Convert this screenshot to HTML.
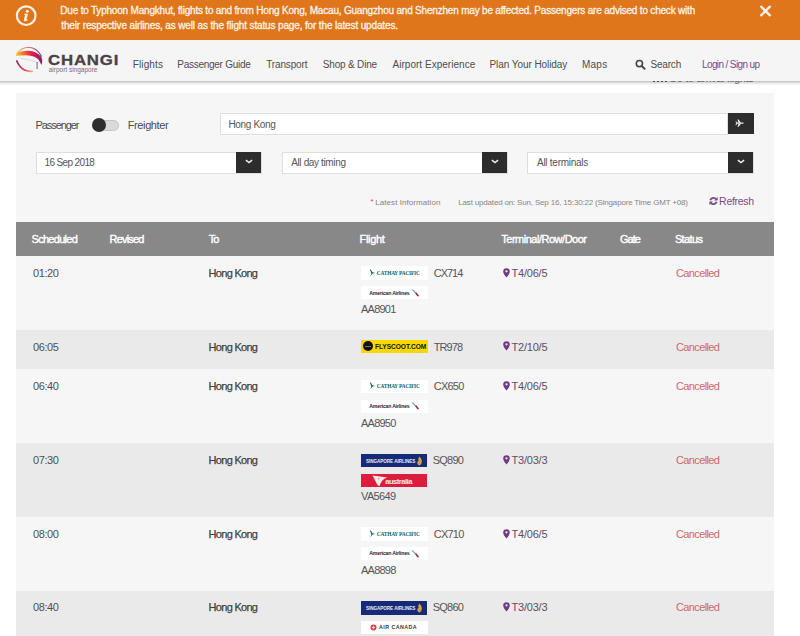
<!DOCTYPE html>
<html><head><meta charset="utf-8">
<style>
html,body{margin:0;padding:0;}
body{width:800px;height:636px;overflow:hidden;position:relative;background:#ffffff;font-family:"Liberation Sans",sans-serif;}
#root{position:relative;width:800px;height:636px;overflow:hidden;background:#ffffff;}
.a{position:absolute;}
.t{position:absolute;z-index:6;white-space:nowrap;font-family:"Liberation Sans",sans-serif;}
#banner{left:0;top:0;width:800px;height:40px;background:#df761c;}
#nav{left:-10px;top:40px;width:820px;height:41px;background:#f5f5f5;box-shadow:0 1.5px 3px rgba(0,0,0,0.3);z-index:5;}
#panel{left:16px;top:93px;width:758px;height:600px;background:#f6f6f6;}
.box{position:absolute;background:#fff;border:1px solid #dedede;box-sizing:border-box;}
.btn{position:absolute;background:#2d2d2d;}
.row{position:absolute;left:16px;width:758px;}
.logo{position:absolute;left:361px;width:67px;height:13px;}
</style></head>
<body>
<div id="root">
<div id="banner" class="a"></div>
<svg class="a" style="left:14px;top:4px;z-index:6" width="26" height="24" viewBox="0 0 26 24">
  <circle cx="12.2" cy="11.7" r="9.3" fill="none" stroke="#fdf1e4" stroke-width="2.2"/>
  <circle cx="13.3" cy="7.3" r="1.5" fill="#fdf1e4"/>
  <path d="M10.4 9.8 L14 9.8 L12.6 15 Q12.4 15.8 13.4 15.2 L13.7 16 Q12 17.6 10.6 17.2 Q9.6 16.8 10 15.3 L11 11 L10.2 10.8 Z" fill="#fdf1e4"/>
</svg>
<svg class="a" style="left:758px;top:4px;z-index:6" width="15" height="15" viewBox="0 0 15 15">
  <path d="M2.5 2 L12.5 12 M12.5 2 L2.5 12" stroke="#fdf3e8" stroke-width="2.4"/>
</svg>

<!-- hidden go-to-arrival text behind nav -->
<div class="a" style="left:652px;top:80px;width:16px;height:3px;z-index:1">
  <div class="a" style="left:1px;top:0;width:2px;height:2.4px;background:#666"></div>
  <div class="a" style="left:5px;top:0;width:2px;height:2.4px;background:#666"></div>
  <div class="a" style="left:9px;top:0;width:2px;height:2.4px;background:#666"></div>
  <div class="a" style="left:13px;top:0;width:2px;height:2.4px;background:#666"></div>
</div>
<div id="nav" class="a">
  <svg class="a" style="left:24px;top:5px" width="32" height="30" viewBox="14 45 32 30">
    <defs>
      <linearGradient id="g1" x1="16" y1="0" x2="42" y2="0" gradientUnits="userSpaceOnUse">
        <stop offset="0" stop-color="#f9d030"/><stop offset="0.3" stop-color="#f46a22"/><stop offset="0.6" stop-color="#e81c48"/><stop offset="0.85" stop-color="#b01a64"/><stop offset="1" stop-color="#7a2a6a"/>
      </linearGradient>
      <linearGradient id="g2" x1="16" y1="0" x2="42" y2="0" gradientUnits="userSpaceOnUse">
        <stop offset="0" stop-color="#f5b030"/><stop offset="0.4" stop-color="#e88a8a"/><stop offset="0.75" stop-color="#9a4a7a"/><stop offset="1" stop-color="#5a3a5a"/>
      </linearGradient>
      <linearGradient id="g3" x1="16" y1="60" x2="33" y2="72" gradientUnits="userSpaceOnUse">
        <stop offset="0" stop-color="#8a2060"/><stop offset="0.55" stop-color="#e02848"/><stop offset="1" stop-color="#f8c070"/>
      </linearGradient>
    </defs>
    <path d="M17 53.8 Q21 47.3 28.6 47.2 Q37 47.5 41.6 56.5" fill="none" stroke="url(#g2)" stroke-width="1.1"/>
    <path d="M15.6 56 Q16 53.4 17.6 52.6 Q22 50.4 28.6 50.7 Q36.8 51.2 41 56.6 Q43.2 60.4 41.4 65 Q40 61.8 38.4 59.4 Q35.2 55.8 28.6 55.4 Q21.5 55.2 15.6 56 Z" fill="url(#g1)"/>
    <path d="M20 58.4 Q28 59.2 34 61.4 Q36.5 62.3 38.3 63" fill="none" stroke="#cdd0d8" stroke-width="0.8"/>
    <path d="M37.1 62 L37.1 69" fill="none" stroke="#5a5060" stroke-width="0.9"/>
    <path d="M16.8 61 Q19.5 67.5 24.5 70 Q28.5 71.8 32.5 71.3" fill="none" stroke="url(#g3)" stroke-width="1.7" stroke-linecap="round"/>
  </svg>
  <svg class="a" style="left:644px;top:19px" width="14" height="12" viewBox="634 59 14 12">
    <circle cx="639.4" cy="63.6" r="3.1" fill="none" stroke="#444" stroke-width="1.6"/>
    <path d="M641.6 65.9 L644.6 68.8" stroke="#444" stroke-width="1.9" stroke-linecap="round"/>
  </svg>
</div>

<div id="panel" class="a"></div>

<!-- toggle -->
<div class="a" style="left:99px;top:120px;width:20px;height:11px;border-radius:6px;background:#dadada;border:1px solid #c4c4c4;box-sizing:border-box"></div>
<div class="a" style="left:92px;top:118.3px;width:14px;height:14px;border-radius:50%;background:#2e2e2e"></div>

<!-- search input -->
<div class="box" style="left:220px;top:113px;width:508px;height:22px"></div>
<div class="btn" style="left:727.5px;top:113px;width:26px;height:21px"></div>
<svg class="a" style="left:735.4px;top:118.6px" width="9.2" height="8.4" viewBox="0 0 11 10">
  <path d="M1.2 4.3 L9.2 4.3 Q10.6 4.5 10.6 5 Q10.6 5.5 9.2 5.7 L1.2 5.7 Z" fill="#f0f0f0"/>
  <path d="M4.2 4.4 L3 0.6 L4.3 0.6 L7.2 4.4 Z M4.2 5.6 L3 9.4 L4.3 9.4 L7.2 5.6 Z" fill="#f0f0f0"/>
  <path d="M1.2 4.5 L0.6 2.6 L1.5 2.6 L2.6 4.5 Z M1.2 5.5 L0.6 7.4 L1.5 7.4 L2.6 5.5 Z" fill="#f0f0f0"/>
</svg>

<!-- selects -->
<div class="box" style="left:36px;top:151.5px;width:226px;height:22px"></div>
<div class="btn" style="left:236px;top:151.5px;width:25px;height:21.5px"></div>
<div class="box" style="left:281.5px;top:151.5px;width:226px;height:22px"></div>
<div class="btn" style="left:481.5px;top:151.5px;width:25.5px;height:21.5px"></div>
<div class="box" style="left:527px;top:151.5px;width:227px;height:22px"></div>
<div class="btn" style="left:727.5px;top:152px;width:25.5px;height:21px"></div>
<svg class="a" style="left:244px;top:158px" width="10" height="8" viewBox="0 0 10 8"><path d="M1.9 2.1 L5 4.6 L8.1 2.1" fill="none" stroke="#eee" stroke-width="1.5"/></svg>
<svg class="a" style="left:489.5px;top:158px" width="10" height="8" viewBox="0 0 10 8"><path d="M1.9 2.1 L5 4.6 L8.1 2.1" fill="none" stroke="#eee" stroke-width="1.5"/></svg>
<svg class="a" style="left:735.5px;top:158px" width="10" height="8" viewBox="0 0 10 8"><path d="M1.9 2.1 L5 4.6 L8.1 2.1" fill="none" stroke="#eee" stroke-width="1.5"/></svg>

<!-- refresh icon -->
<svg class="a" style="left:708px;top:196px" width="11" height="10" viewBox="0 0 11 10">
  <path d="M2.3 4.2 A3.4 3.4 0 0 1 8.2 3.2" fill="none" stroke="#7d4b8a" stroke-width="1.9"/>
  <path d="M9.6 1 L9.6 4.6 L6 4.6 Z" fill="#7d4b8a"/>
  <path d="M8.7 5.8 A3.4 3.4 0 0 1 2.8 6.8" fill="none" stroke="#7d4b8a" stroke-width="1.9"/>
  <path d="M1.4 9 L1.4 5.4 L5 5.4 Z" fill="#7d4b8a"/>
</svg>

<!-- table -->
<div class="row" style="top:222.3px;height:33.7px;background:#888888"></div>
<div class="row" style="top:256px;height:73.8px;background:#f6f6f6"></div>
<div class="row" style="top:329.8px;height:39.6px;background:#eaeaea"></div>
<div class="row" style="top:369.6px;height:73.5px;background:#f6f6f6"></div>
<div class="row" style="top:443.1px;height:73.8px;background:#eaeaea"></div>
<div class="row" style="top:516.9px;height:73.7px;background:#f6f6f6"></div>
<div class="row" style="top:590.6px;height:50px;background:#eaeaea"></div>

<div class="logo" style="top:266.2px;height:13.5px;background:#fff"></div>
<svg class="a" style="left:368.5px;top:269.0px" width="7" height="8" viewBox="0 0 7 8"><path d="M0.8 0.6 L1.8 0.5 L3.4 3.3 L6.4 3.9 L3.6 4.4 L1.2 7.3 L2.4 4.2 Z" fill="#0b5e58"/></svg>
<div class="t" style="left:376.8px;top:270.8px;font:bold 5.4px/5px 'Liberation Serif';letter-spacing:-0.2px;color:#175f5a">CATHAY PACIFIC</div>
<div class="logo" style="top:286.2px;height:13.2px;background:#fff"></div>
<div class="t" style="left:369.3px;top:290.5px;font:bold 5.2px/5px 'Liberation Sans';letter-spacing:-0.22px;color:#222830">American Airlines</div>
<svg class="a" style="left:410.5px;top:288.8px" width="9" height="8" viewBox="0 0 9 8"><path d="M0.4 0.4 L2.2 0.6 L5.2 3.6 L3.8 3.8 Z" fill="#7a9ab8"/><path d="M3.6 3.4 L5.6 3.4 L8.4 7.2 L6.4 7.2 Z" fill="#8a3050"/></svg>
<svg class="a" style="left:502.5px;top:267.6px" width="7" height="10" viewBox="0 0 7 10"><path d="M3.5 0.3 Q6.8 0.3 6.8 3.4 Q6.8 5.6 3.5 9.6 Q0.2 5.6 0.2 3.4 Q0.2 0.3 3.5 0.3 Z M3.5 2.2 A1.15 1.15 0 1 0 3.5 4.5 A1.15 1.15 0 1 0 3.5 2.2 Z" fill="#6f3b82" fill-rule="evenodd"/></svg>
<div class="logo" style="top:340.0px;height:12.5px;background:#fcd800"></div>
<div class="a" style="left:362.8px;top:341.2px;width:10.3px;height:10.3px;border-radius:50%;background:#111"></div>
<div class="a" style="left:365px;top:345.6px;width:6px;height:1.4px;background:#777"></div>
<div class="t" style="left:375px;top:343.1px;font:bold 6.6px/7px 'Liberation Sans';letter-spacing:-0.05px;color:#111">FLYSCOOT.COM</div>
<svg class="a" style="left:502.5px;top:341.4px" width="7" height="10" viewBox="0 0 7 10"><path d="M3.5 0.3 Q6.8 0.3 6.8 3.4 Q6.8 5.6 3.5 9.6 Q0.2 5.6 0.2 3.4 Q0.2 0.3 3.5 0.3 Z M3.5 2.2 A1.15 1.15 0 1 0 3.5 4.5 A1.15 1.15 0 1 0 3.5 2.2 Z" fill="#6f3b82" fill-rule="evenodd"/></svg>
<div class="logo" style="top:379.6px;height:13.5px;background:#fff"></div>
<svg class="a" style="left:368.5px;top:382.40000000000003px" width="7" height="8" viewBox="0 0 7 8"><path d="M0.8 0.6 L1.8 0.5 L3.4 3.3 L6.4 3.9 L3.6 4.4 L1.2 7.3 L2.4 4.2 Z" fill="#0b5e58"/></svg>
<div class="t" style="left:376.8px;top:384.20000000000005px;font:bold 5.4px/5px 'Liberation Serif';letter-spacing:-0.2px;color:#175f5a">CATHAY PACIFIC</div>
<div class="logo" style="top:399.6px;height:13.2px;background:#fff"></div>
<div class="t" style="left:369.3px;top:403.90000000000003px;font:bold 5.2px/5px 'Liberation Sans';letter-spacing:-0.22px;color:#222830">American Airlines</div>
<svg class="a" style="left:410.5px;top:402.20000000000005px" width="9" height="8" viewBox="0 0 9 8"><path d="M0.4 0.4 L2.2 0.6 L5.2 3.6 L3.8 3.8 Z" fill="#7a9ab8"/><path d="M3.6 3.4 L5.6 3.4 L8.4 7.2 L6.4 7.2 Z" fill="#8a3050"/></svg>
<svg class="a" style="left:502.5px;top:381.0px" width="7" height="10" viewBox="0 0 7 10"><path d="M3.5 0.3 Q6.8 0.3 6.8 3.4 Q6.8 5.6 3.5 9.6 Q0.2 5.6 0.2 3.4 Q0.2 0.3 3.5 0.3 Z M3.5 2.2 A1.15 1.15 0 1 0 3.5 4.5 A1.15 1.15 0 1 0 3.5 2.2 Z" fill="#6f3b82" fill-rule="evenodd"/></svg>
<div class="logo" style="top:453.6px;height:13.5px;width:66.3px;background:#172a78"></div>
<div class="t" style="left:366px;top:458.6px;font:bold 4.6px/5px 'Liberation Sans';letter-spacing:-0.05px;color:#e8ecf6">SINGAPORE AIRLINES</div>
<svg class="a" style="left:415.8px;top:455.8px" width="7" height="10" viewBox="0 0 7 10"><path d="M3.2 0.5 Q5.6 2 5.9 5 Q6 8.2 3.6 9.4 Q1.6 9.2 1.2 7 Q1 5.4 2.6 5 Q1.6 3.2 3.2 0.5 Z" fill="#d8a440"/><path d="M3 6 Q4 6.6 3.6 8.2" stroke="#b07a20" stroke-width="0.5" fill="none"/></svg>
<div class="logo" style="top:473.6px;height:13px;width:66px;background:#dc1e3e"></div>
<svg class="a" style="left:372px;top:474.6px" width="16" height="12" viewBox="0 0 16 12"><path d="M0.6 0.4 Q8 1.2 15.2 2.6 Q12 4 10.6 5.2 Q9 6.8 7.4 11.2 Q5.8 10.6 4.6 8.4 Q3 5.2 0.6 0.4 Z" fill="#fbe6ea"/><path d="M5.6 3.2 L7.4 3.4 L7 4.4 Z" fill="#dc1e3e"/></svg>
<div class="t" style="left:385.2px;top:477.5px;font:bold 7.6px/8px 'Liberation Sans';letter-spacing:-0.5px;color:#fbe6ea">australia</div>
<svg class="a" style="left:502.5px;top:454.7px" width="7" height="10" viewBox="0 0 7 10"><path d="M3.5 0.3 Q6.8 0.3 6.8 3.4 Q6.8 5.6 3.5 9.6 Q0.2 5.6 0.2 3.4 Q0.2 0.3 3.5 0.3 Z M3.5 2.2 A1.15 1.15 0 1 0 3.5 4.5 A1.15 1.15 0 1 0 3.5 2.2 Z" fill="#6f3b82" fill-rule="evenodd"/></svg>
<div class="logo" style="top:527.1px;height:13.5px;background:#fff"></div>
<svg class="a" style="left:368.5px;top:529.9px" width="7" height="8" viewBox="0 0 7 8"><path d="M0.8 0.6 L1.8 0.5 L3.4 3.3 L6.4 3.9 L3.6 4.4 L1.2 7.3 L2.4 4.2 Z" fill="#0b5e58"/></svg>
<div class="t" style="left:376.8px;top:531.7px;font:bold 5.4px/5px 'Liberation Serif';letter-spacing:-0.2px;color:#175f5a">CATHAY PACIFIC</div>
<div class="logo" style="top:547.1px;height:13.2px;background:#fff"></div>
<div class="t" style="left:369.3px;top:551.4px;font:bold 5.2px/5px 'Liberation Sans';letter-spacing:-0.22px;color:#222830">American Airlines</div>
<svg class="a" style="left:410.5px;top:549.7px" width="9" height="8" viewBox="0 0 9 8"><path d="M0.4 0.4 L2.2 0.6 L5.2 3.6 L3.8 3.8 Z" fill="#7a9ab8"/><path d="M3.6 3.4 L5.6 3.4 L8.4 7.2 L6.4 7.2 Z" fill="#8a3050"/></svg>
<svg class="a" style="left:502.5px;top:528.5px" width="7" height="10" viewBox="0 0 7 10"><path d="M3.5 0.3 Q6.8 0.3 6.8 3.4 Q6.8 5.6 3.5 9.6 Q0.2 5.6 0.2 3.4 Q0.2 0.3 3.5 0.3 Z M3.5 2.2 A1.15 1.15 0 1 0 3.5 4.5 A1.15 1.15 0 1 0 3.5 2.2 Z" fill="#6f3b82" fill-rule="evenodd"/></svg>
<div class="logo" style="top:601.0px;height:13.5px;width:66.3px;background:#172a78"></div>
<div class="t" style="left:366px;top:606.0px;font:bold 4.6px/5px 'Liberation Sans';letter-spacing:-0.05px;color:#e8ecf6">SINGAPORE AIRLINES</div>
<svg class="a" style="left:415.8px;top:603.2px" width="7" height="10" viewBox="0 0 7 10"><path d="M3.2 0.5 Q5.6 2 5.9 5 Q6 8.2 3.6 9.4 Q1.6 9.2 1.2 7 Q1 5.4 2.6 5 Q1.6 3.2 3.2 0.5 Z" fill="#d8a440"/><path d="M3 6 Q4 6.6 3.6 8.2" stroke="#b07a20" stroke-width="0.5" fill="none"/></svg>
<div class="logo" style="top:621.1px;height:13px;background:#fff"></div>
<svg class="a" style="left:369.5px;top:624.1px" width="7" height="7" viewBox="0 0 7 7"><circle cx="3.5" cy="3.5" r="3" fill="#de3a46"/><path d="M3.5 1.6 L4.3 3 L5.2 2.8 L4.6 4.2 L3.7 4.4 L3.7 5.4 L3.3 5.4 L3.3 4.4 L2.4 4.2 L1.8 2.8 L2.7 3 Z" fill="#f6d4d8"/></svg>
<div class="t" style="left:379px;top:625.3000000000001px;font:bold 5.3px/5px 'Liberation Sans';letter-spacing:0.45px;color:#3a3a3a">AIR CANADA</div>
<svg class="a" style="left:502.5px;top:602.2px" width="7" height="10" viewBox="0 0 7 10"><path d="M3.5 0.3 Q6.8 0.3 6.8 3.4 Q6.8 5.6 3.5 9.6 Q0.2 5.6 0.2 3.4 Q0.2 0.3 3.5 0.3 Z M3.5 2.2 A1.15 1.15 0 1 0 3.5 4.5 A1.15 1.15 0 1 0 3.5 2.2 Z" fill="#6f3b82" fill-rule="evenodd"/></svg>
<div class="t" style="left:60.30px;top:6.30px;font-size:10px;line-height:10px;font-weight:400;letter-spacing:-0.198px;color:#fdf3e8;-webkit-text-stroke:0.3px #fdf3e8">Due to Typhoon Mangkhut, flights to and from Hong Kong, Macau, Guangzhou and Shenzhen may be affected. Passengers are advised to check with</div>
<div class="t" style="left:61.30px;top:20.70px;font-size:10px;line-height:10px;font-weight:400;letter-spacing:-0.140px;color:#fdf3e8;-webkit-text-stroke:0.3px #fdf3e8">their respective airlines, as well as the flight status page, for the latest updates.</div>
<div class="t" style="left:48.20px;top:52.20px;font-size:15px;line-height:15px;font-weight:700;letter-spacing:0.721px;color:#4a4045;-webkit-text-stroke:0.3px #4a4045;transform:scaleX(1.12);transform-origin:0 0">CHANGI</div>
<div class="t" style="left:48.70px;top:67.00px;font-size:6.5px;line-height:6.5px;font-weight:400;letter-spacing:0.000px;color:#7a6a7a;">airport singapore</div>
<div class="t" style="left:132.75px;top:59.50px;font-size:10px;line-height:10px;font-weight:400;letter-spacing:0.125px;color:#4d4d4d;">Flights</div>
<div class="t" style="left:177.25px;top:59.50px;font-size:10px;line-height:10px;font-weight:400;letter-spacing:-0.268px;color:#4d4d4d;">Passenger Guide</div>
<div class="t" style="left:266.25px;top:59.50px;font-size:10px;line-height:10px;font-weight:400;letter-spacing:-0.156px;color:#4d4d4d;">Transport</div>
<div class="t" style="left:322.75px;top:59.50px;font-size:10px;line-height:10px;font-weight:400;letter-spacing:-0.175px;color:#4d4d4d;">Shop &amp; Dine</div>
<div class="t" style="left:392.50px;top:59.50px;font-size:10px;line-height:10px;font-weight:400;letter-spacing:0.029px;color:#4d4d4d;">Airport Experience</div>
<div class="t" style="left:489.50px;top:59.50px;font-size:10px;line-height:10px;font-weight:400;letter-spacing:-0.069px;color:#4d4d4d;">Plan Your Holiday</div>
<div class="t" style="left:582.00px;top:59.50px;font-size:10px;line-height:10px;font-weight:400;letter-spacing:0.233px;color:#4d4d4d;">Maps</div>
<div class="t" style="left:650.40px;top:59.50px;font-size:10px;line-height:10px;font-weight:400;letter-spacing:-0.160px;color:#4d4d4d;">Search</div>
<div class="t" style="left:668.50px;top:73.00px;font-size:11px;line-height:11px;font-weight:400;letter-spacing:-0.325px;color:#777777;z-index:1">Go to arrival flights</div>
<div class="t" style="left:702.00px;top:60.00px;font-size:10px;line-height:10px;font-weight:400;letter-spacing:-0.621px;color:#7b4a87;">Login / Sign up</div>
<div class="t" style="left:35.50px;top:120.40px;font-size:11px;line-height:11px;font-weight:400;letter-spacing:-1.075px;color:#4a4a4a;">Passenger</div>
<div class="t" style="left:127.70px;top:120.40px;font-size:11px;line-height:11px;font-weight:400;letter-spacing:-0.375px;color:#4a4a4a;">Freighter</div>
<div class="t" style="left:228.50px;top:120.00px;font-size:10px;line-height:10px;font-weight:400;letter-spacing:-0.350px;color:#555555;">Hong Kong</div>
<div class="t" style="left:44.50px;top:158.00px;font-size:10px;line-height:10px;font-weight:400;letter-spacing:-0.630px;color:#555555;">16 Sep 2018</div>
<div class="t" style="left:291.20px;top:158.00px;font-size:10px;line-height:10px;font-weight:400;letter-spacing:-0.362px;color:#555555;">All day timing</div>
<div class="t" style="left:537.00px;top:158.00px;font-size:10px;line-height:10px;font-weight:400;letter-spacing:-0.267px;color:#555555;">All terminals</div>
<div class="t" style="left:370.50px;top:197.50px;font-size:8px;line-height:8px;font-weight:400;letter-spacing:0.000px;color:#e04848;">*</div>
<div class="t" style="left:375.30px;top:199.00px;font-size:8px;line-height:8px;font-weight:400;letter-spacing:0.059px;color:#858585;">Latest Information</div>
<div class="t" style="left:458.30px;top:199.00px;font-size:8px;line-height:8px;font-weight:400;letter-spacing:-0.177px;color:#858585;">Last updated on: Sun, Sep 16, 15:30:22 (Singapore Time GMT +08)</div>
<div class="t" style="left:719.10px;top:195.80px;font-size:10.5px;line-height:10.5px;font-weight:400;letter-spacing:-0.300px;color:#7b4a87;">Refresh</div>
<div class="t" style="left:31.50px;top:233.50px;font-size:11px;line-height:11px;font-weight:400;letter-spacing:-0.700px;color:#ffffff;-webkit-text-stroke:0.4px #fff">Scheduled</div>
<div class="t" style="left:109.60px;top:233.50px;font-size:11px;line-height:11px;font-weight:400;letter-spacing:-0.808px;color:#ffffff;-webkit-text-stroke:0.4px #fff">Revised</div>
<div class="t" style="left:208.75px;top:233.50px;font-size:11px;line-height:11px;font-weight:400;letter-spacing:-1.000px;color:#ffffff;-webkit-text-stroke:0.4px #fff">To</div>
<div class="t" style="left:359.50px;top:233.50px;font-size:11px;line-height:11px;font-weight:400;letter-spacing:-0.300px;color:#ffffff;-webkit-text-stroke:0.4px #fff">Flight</div>
<div class="t" style="left:501.30px;top:233.50px;font-size:11px;line-height:11px;font-weight:400;letter-spacing:-0.488px;color:#ffffff;-webkit-text-stroke:0.4px #fff">Terminal/Row/Door</div>
<div class="t" style="left:620.00px;top:233.50px;font-size:11px;line-height:11px;font-weight:400;letter-spacing:-1.000px;color:#ffffff;-webkit-text-stroke:0.4px #fff">Gate</div>
<div class="t" style="left:674.90px;top:233.50px;font-size:11px;line-height:11px;font-weight:400;letter-spacing:-0.620px;color:#ffffff;-webkit-text-stroke:0.4px #fff">Status</div>
<div class="t" style="left:32.90px;top:267.80px;font-size:11px;line-height:11px;font-weight:400;letter-spacing:-0.375px;color:#505050;">01:20</div>
<div class="t" style="left:208.60px;top:267.80px;font-size:11px;line-height:11px;font-weight:400;letter-spacing:-0.713px;color:#3f3f3f;-webkit-text-stroke:0.25px #3f3f3f">Hong Kong</div>
<div class="t" style="left:433.70px;top:267.80px;font-size:11px;line-height:11px;font-weight:400;letter-spacing:-1.000px;color:#555555;">CX714</div>
<div class="t" style="left:361.00px;top:304.30px;font-size:11px;line-height:11px;font-weight:400;letter-spacing:-0.760px;color:#555555;">AA8901</div>
<div class="t" style="left:511.50px;top:267.80px;font-size:11px;line-height:11px;font-weight:400;letter-spacing:-0.217px;color:#5e4e6a;">T4/06/5</div>
<div class="t" style="left:676.00px;top:267.80px;font-size:11px;line-height:11px;font-weight:400;letter-spacing:-0.625px;color:#d2666b;">Cancelled</div>
<div class="t" style="left:32.90px;top:341.60px;font-size:11px;line-height:11px;font-weight:400;letter-spacing:-0.375px;color:#505050;">06:05</div>
<div class="t" style="left:208.60px;top:341.60px;font-size:11px;line-height:11px;font-weight:400;letter-spacing:-0.713px;color:#3f3f3f;-webkit-text-stroke:0.25px #3f3f3f">Hong Kong</div>
<div class="t" style="left:433.70px;top:341.60px;font-size:11px;line-height:11px;font-weight:400;letter-spacing:-0.925px;color:#555555;">TR978</div>
<div class="t" style="left:511.50px;top:341.60px;font-size:11px;line-height:11px;font-weight:400;letter-spacing:-0.217px;color:#5e4e6a;">T2/10/5</div>
<div class="t" style="left:676.00px;top:341.60px;font-size:11px;line-height:11px;font-weight:400;letter-spacing:-0.625px;color:#d2666b;">Cancelled</div>
<div class="t" style="left:32.90px;top:381.20px;font-size:11px;line-height:11px;font-weight:400;letter-spacing:-0.375px;color:#505050;">06:40</div>
<div class="t" style="left:208.60px;top:381.20px;font-size:11px;line-height:11px;font-weight:400;letter-spacing:-0.713px;color:#3f3f3f;-webkit-text-stroke:0.25px #3f3f3f">Hong Kong</div>
<div class="t" style="left:433.70px;top:381.20px;font-size:11px;line-height:11px;font-weight:400;letter-spacing:-0.750px;color:#555555;">CX650</div>
<div class="t" style="left:361.00px;top:417.70px;font-size:11px;line-height:11px;font-weight:400;letter-spacing:-0.760px;color:#555555;">AA8950</div>
<div class="t" style="left:511.50px;top:381.20px;font-size:11px;line-height:11px;font-weight:400;letter-spacing:-0.217px;color:#5e4e6a;">T4/06/5</div>
<div class="t" style="left:676.00px;top:381.20px;font-size:11px;line-height:11px;font-weight:400;letter-spacing:-0.625px;color:#d2666b;">Cancelled</div>
<div class="t" style="left:32.90px;top:454.90px;font-size:11px;line-height:11px;font-weight:400;letter-spacing:-0.375px;color:#505050;">07:30</div>
<div class="t" style="left:208.60px;top:454.90px;font-size:11px;line-height:11px;font-weight:400;letter-spacing:-0.713px;color:#3f3f3f;-webkit-text-stroke:0.25px #3f3f3f">Hong Kong</div>
<div class="t" style="left:432.70px;top:454.90px;font-size:11px;line-height:11px;font-weight:400;letter-spacing:-0.750px;color:#555555;">SQ890</div>
<div class="t" style="left:361.00px;top:491.40px;font-size:11px;line-height:11px;font-weight:400;letter-spacing:-0.640px;color:#555555;">VA5649</div>
<div class="t" style="left:511.50px;top:454.90px;font-size:11px;line-height:11px;font-weight:400;letter-spacing:-0.217px;color:#5e4e6a;">T3/03/3</div>
<div class="t" style="left:676.00px;top:454.90px;font-size:11px;line-height:11px;font-weight:400;letter-spacing:-0.625px;color:#d2666b;">Cancelled</div>
<div class="t" style="left:32.90px;top:528.70px;font-size:11px;line-height:11px;font-weight:400;letter-spacing:-0.375px;color:#505050;">08:00</div>
<div class="t" style="left:208.60px;top:528.70px;font-size:11px;line-height:11px;font-weight:400;letter-spacing:-0.713px;color:#3f3f3f;-webkit-text-stroke:0.25px #3f3f3f">Hong Kong</div>
<div class="t" style="left:433.70px;top:528.70px;font-size:11px;line-height:11px;font-weight:400;letter-spacing:-0.750px;color:#555555;">CX710</div>
<div class="t" style="left:361.00px;top:565.20px;font-size:11px;line-height:11px;font-weight:400;letter-spacing:-0.760px;color:#555555;">AA8898</div>
<div class="t" style="left:511.50px;top:528.70px;font-size:11px;line-height:11px;font-weight:400;letter-spacing:-0.217px;color:#5e4e6a;">T4/06/5</div>
<div class="t" style="left:676.00px;top:528.70px;font-size:11px;line-height:11px;font-weight:400;letter-spacing:-0.625px;color:#d2666b;">Cancelled</div>
<div class="t" style="left:32.90px;top:602.40px;font-size:11px;line-height:11px;font-weight:400;letter-spacing:-0.375px;color:#505050;">08:40</div>
<div class="t" style="left:208.60px;top:602.40px;font-size:11px;line-height:11px;font-weight:400;letter-spacing:-0.713px;color:#3f3f3f;-webkit-text-stroke:0.25px #3f3f3f">Hong Kong</div>
<div class="t" style="left:432.70px;top:602.40px;font-size:11px;line-height:11px;font-weight:400;letter-spacing:-0.750px;color:#555555;">SQ860</div>
<div class="t" style="left:511.50px;top:602.40px;font-size:11px;line-height:11px;font-weight:400;letter-spacing:-0.217px;color:#5e4e6a;">T3/03/3</div>
<div class="t" style="left:676.00px;top:602.40px;font-size:11px;line-height:11px;font-weight:400;letter-spacing:-0.625px;color:#d2666b;">Cancelled</div>
</div>
</body></html>
